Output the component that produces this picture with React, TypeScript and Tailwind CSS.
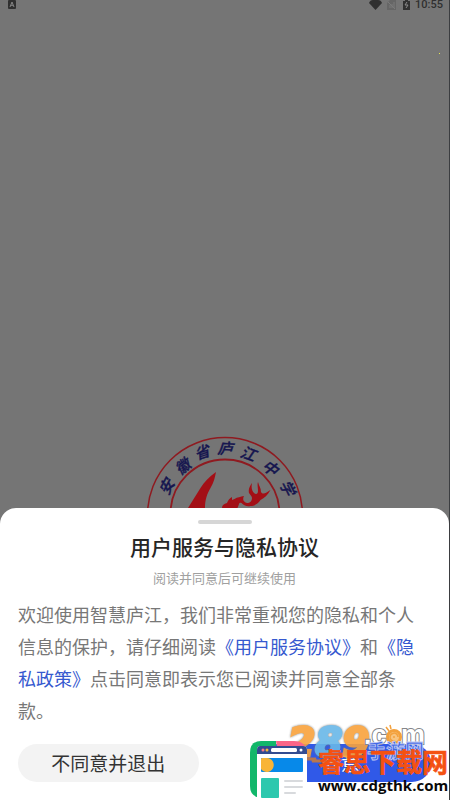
import React from "react";

const sans = "font-['Noto_Sans_CJK_SC','Noto_Sans',sans-serif]";

const sealCharacters = [
  { char: "安", x: 22, y: 51, angle: -62 },
  { char: "徽", x: 38, y: 31, angle: -38 },
  { char: "省", x: 57, y: 17, angle: -18 },
  { char: "庐", x: 80, y: 13, angle: 4 },
  { char: "江", x: 103, y: 18, angle: 20 },
  { char: "中", x: 125, y: 32, angle: 36 },
  { char: "学", x: 142, y: 52, angle: 64 },
];

function StatusBar() {
  return (
    <header className="flex h-2.5 items-center justify-between pr-1.5 pl-2 text-[#303030]">
      <svg className="h-2.5 w-2" viewBox="0 0 8 10" aria-hidden="true">
        <rect width="8" height="9" rx="1" fill="currentColor" />
        <path d="M2 7 4 2 6 7M2.8 5.3h2.4" fill="none" stroke="#858585" />
      </svg>
      <div className="flex items-center">
        <svg className="h-2.5 w-[42px]" viewBox="0 0 42 10" aria-hidden="true">
          <path d="M0 3Q1 0 4 0h5q3 0 4 3L6.5 10Z" fill="currentColor" />
          <path d="M18 3 21 0h6v10h-9Z" fill="#666" />
          <path d="m19 2 7 7M21 8V5m2 3V4m2 4V2" stroke="#7b7b7b" />
          <path d="M34 1h2V0h3v1h2v9h-7Z" fill="currentColor" />
          <path d="m38 2-2 3h3l-2 3" fill="none" stroke="#8a8a8a" />
        </svg>
        <time className="ml-1 font-[Roboto,sans-serif] text-[11px] leading-[10px] font-medium">10:55</time>
      </div>
    </header>
  );
}

function SchoolSeal() {
  return (
    <svg className="block h-[72px] w-40" viewBox="0 0 160 72" role="img" aria-label="安徽省庐江中学">
      <g fill="none" stroke="#8f1a20">
        <circle cx="80" cy="79" r="77.5" strokeWidth="1.5" />
        <circle cx="80" cy="78" r="54.5" strokeWidth="1.8" />
      </g>
      <g fill="#15154f" stroke="#15154f" strokeWidth="0.4" fontSize="15" fontWeight="500" fontStyle="italic" textAnchor="middle" className={sans}>
        {sealCharacters.map(({ char, x, y, angle }) => (
          <text key={char} transform={`translate(${x} ${y}) rotate(${angle})`} y="5">
            {char}
          </text>
        ))}
      </g>
      <g fill="#a30f16">
        <path d="M71 36C64 41 59 46 55.500 52L43 72h17c0-8 2-14 5.500-20C69 46 70 41 71 36Z" />
        <path d="M77 72c0-3 2-4 5-5 1-3 3-5 5-6l0 3 2.500-1c3-2 6-2 9.500-3-2 4 0 6 3 7 3 0 5-2 5-5 0-2-2-3-3-5-1-4 1-7 3-10-1 5 0 8 2 10 2 2 4 1 4-2 0-4-1-6 0-9 1 4 3 6 3 10 2 3 5 1 9.500-2-3 5-6 8-10 10-3 4-6 6-10 6-4 1-7-1-9-3-3-1-2 1-4 5Z" />
      </g>
    </svg>
  );
}

function Watermarks() {
  return (
    <svg
      className="pointer-events-none absolute right-0 bottom-0 h-20 w-50"
      viewBox="0 0 200 80"
      role="img"
      aria-label="289.com 手游网，睿思下载网 www.cdgthk.com"
    >
      <text
        x="39"
        y="36"
        fontSize="39"
        fontWeight="700"
        fontStyle="italic"
        fontFamily="'DejaVu Sans', sans-serif"
        strokeWidth="3"
        opacity="0.9"
        className="drop-shadow-[0_0_1px_#777]"
      >
        <tspan fill="#f9a33c" stroke="#f9a33c">2</tspan>
        <tspan fill="#69b8e8" stroke="#69b8e8">8</tspan>
        <tspan fill="#f9a33c" stroke="#f9a33c">9</tspan>
      </text>
      <path d="M54 39h13l-4 2h24" fill="none" stroke="#b8774f" strokeWidth="3" />
      <g fill="#fff" stroke="#85868a" strokeWidth="2" fontSize="27" fontWeight="700" fontFamily="'Liberation Sans', sans-serif" paintOrder="stroke">
        <text x="115" y="24">.c</text>
        <text x="152" y="24">m</text>
      </g>
      <g fill="none" stroke="#f3a13c">
        <circle cx="145" cy="17" r="6.5" fill="#f7c480" strokeWidth="3" />
        <path d="M149 17a4 4 0 1 0-3 4m0-4h-2M140 11l-3-4m5 2-1-4" strokeWidth="1.5" />
      </g>
      <text x="118" y="38" fill="#4268e6" stroke="#c5cdf2" strokeWidth="0.8" fontSize="19" fontWeight="700" className={sans}>
        手游网
      </text>

      <path d="M12 21h15v57h-12Q1 78 1 66V33Q1 21 12 21Z" fill="#12b76a" />
      <path d="M27 21h18q12 0 13 12H36Q27 29 27 21Z" fill="#fb6588" />
      <path d="M11 26h43q4 0 4 4v50H8V30q0-4 3-4Z" fill="#fff" />
      <path d="M11 26h43q4 0 4 4v4H8v-4q0-4 3-4Z" fill="#334c91" />
      <circle cx="14" cy="30" r="1.5" fill="#f77b88" />
      <circle cx="18" cy="30" r="1.5" fill="#f6b73c" />
      <rect x="22" y="28" width="26" height="4" rx="1.5" fill="#fff" />
      <circle cx="52" cy="30" r="1.5" fill="#fff" />
      <rect x="12" y="38" width="42" height="14" rx="1" fill="#0789e9" />
      <path d="M13 38h5a7 7 0 1 1-6 11V39Z" fill="#f8b437" />
      <rect x="12" y="58" width="18" height="20" rx="1" fill="#2dc8ae" />
      <path d="M36 61h17M36 67h17M36 73h10" stroke="#d8dadd" strokeWidth="2" strokeLinecap="round" />

      <text x="69" y="52" fill="#f45112" stroke="#f45112" strokeWidth="0.6" fontSize="26" fontWeight="700" className={sans}>
        睿思下载网
      </text>
      <text x="69" y="71" fill="#080808" fontSize="15" fontWeight="700" fontFamily="'Open Sans', sans-serif">
        www.cdgthk.com
      </text>
    </svg>
  );
}

export default function App() {
  return (
    <div className={`relative flex min-h-screen flex-col overflow-hidden border-r border-[#3b3d40] bg-[#757575] ${sans}`}>
      <StatusBar />
      <span className="absolute top-[53px] right-[9px] size-px bg-[#e4e450]" />
      <main className="flex flex-1 items-end justify-center">
        <SchoolSeal />
      </main>

      <section
        role="dialog"
        aria-labelledby="agreement-title"
        className="relative flex flex-col items-center rounded-t-2xl bg-white px-[18px] pt-3 pb-[18px]"
      >
        <div className="h-1 w-[54px] rounded-full bg-[#d6d6d6]" />
        <h1 id="agreement-title" className="mt-2 text-[21px] leading-7 font-medium text-[#262626]">
          用户服务与隐私协议
        </h1>
        <p className="mt-2 text-[13px] leading-5 text-[#a0a0a0]">阅读并同意后可继续使用</p>
        <p className="mt-2.5 w-full text-lg leading-8 text-[#777]">
          欢迎使用智慧庐江，我们非常重视您的隐私和个人信息的保护，请仔细阅读
          <a href="#service" className="text-[#3659cf]">《用户服务协议》</a>和
          <a href="#privacy" className="text-[#3659cf]">《隐私政策》</a>
          点击同意即表示您已阅读并同意全部条款。
        </p>
        <div className="mt-[18px] grid w-full grid-cols-2 gap-[52px] text-[19px]">
          <button type="button" className="h-[38px] rounded-full bg-[#f3f3f3] text-[#333]">
            不同意并退出
          </button>
          <button type="button" className="h-[38px] rounded-full bg-[#3059e8] text-white">
            同意
          </button>
        </div>
      </section>
      <Watermarks />
    </div>
  );
}
